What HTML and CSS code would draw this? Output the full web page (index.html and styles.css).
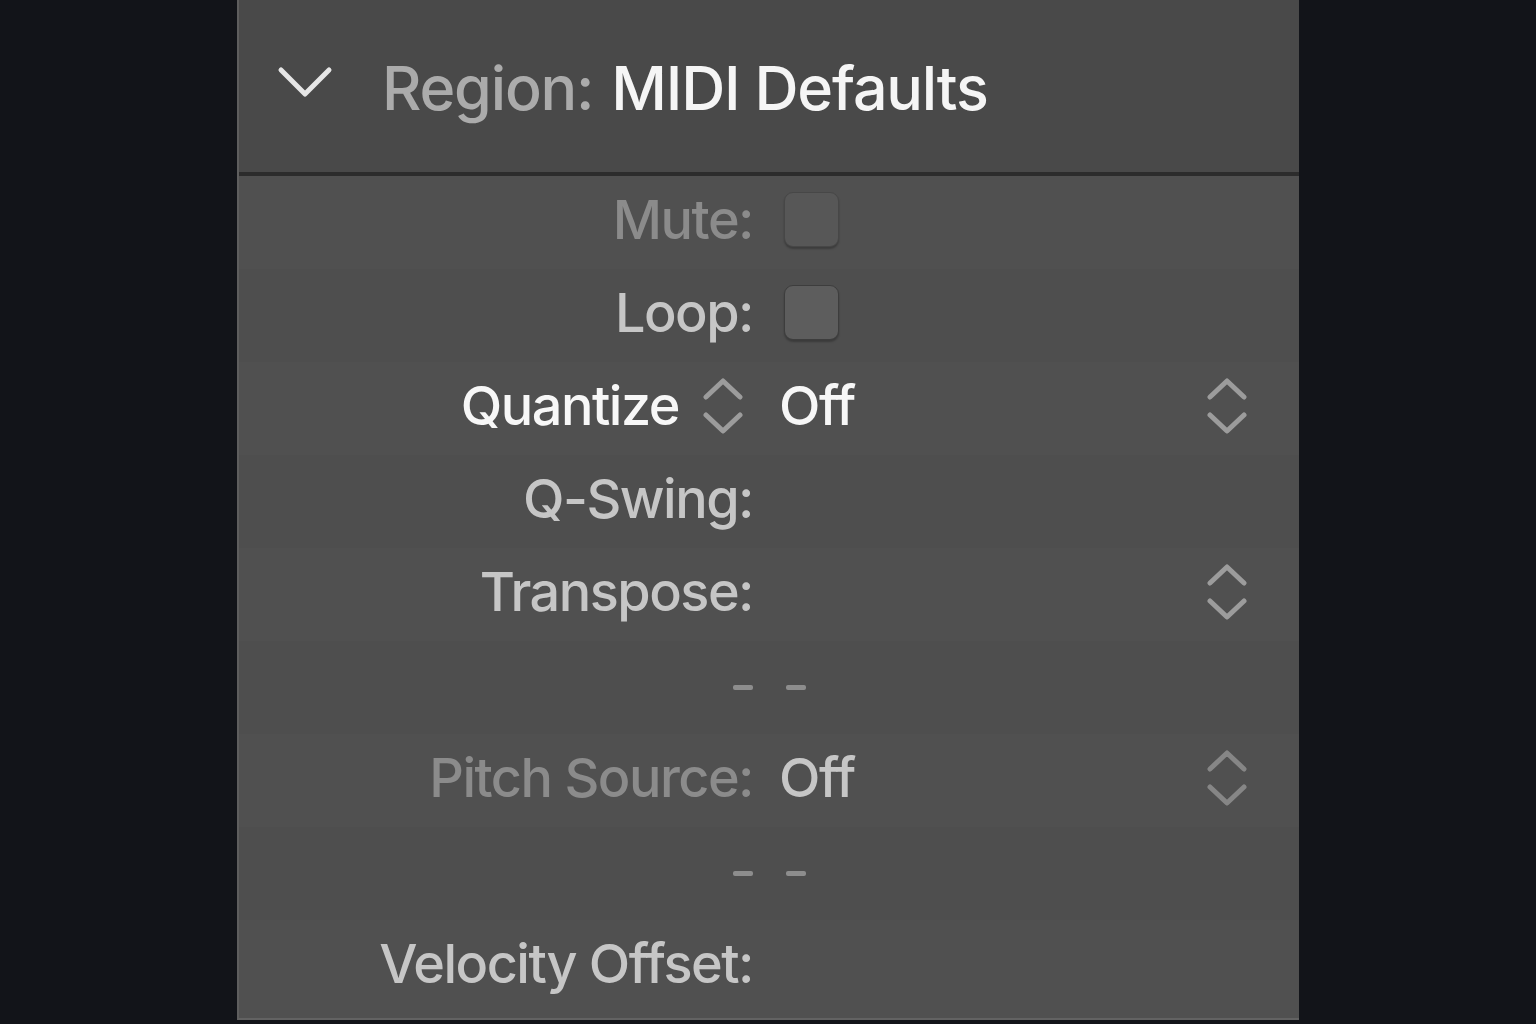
FILE: index.html
```html
<!DOCTYPE html>
<html lang="en">
<head>
    <meta charset="UTF-8">
    <meta name="viewport" content="width=device-width, initial-scale=1.0">
    <title>Region Inspector</title>
    <link rel="stylesheet" href="styles.css">
</head>
<body>
    <div id="inspector">
        <div id="header">
            <svg class="disclosure" width="56" height="32" viewBox="0 0 56 32">
                <path d="M4 4 L28 28 L52 4" fill="none" stroke="#e6e6e6" stroke-width="5" stroke-linecap="round" stroke-linejoin="round"/>
            </svg>
            <span class="title-key">Region:</span>
            <span class="title-value">MIDI Defaults</span>
        </div>

        <div class="row">
            <div class="label dim">Mute:</div>
            <div class="value"><div class="checkbox dim-box"></div></div>
        </div>

        <div class="row">
            <div class="label">Loop:</div>
            <div class="value"><div class="checkbox"></div></div>
        </div>

        <div class="row">
            <div class="label bright">
                Quantize
                <svg class="stepper small" width="40" height="56" viewBox="0 0 40 56">
                    <path d="M3 19 L20 3 L37 19 M3 37 L20 53 L37 37" fill="none" stroke-width="5" stroke-linecap="round" stroke-linejoin="round"/>
                </svg>
            </div>
            <div class="value">
                <span class="bright">Off</span>
                <svg class="stepper" width="40" height="56" viewBox="0 0 40 56">
                    <path d="M3 19 L20 3 L37 19 M3 37 L20 53 L37 37" fill="none" stroke-width="5" stroke-linecap="round" stroke-linejoin="round"/>
                </svg>
            </div>
        </div>

        <div class="row">
            <div class="label">Q-Swing:</div>
            <div class="value"></div>
        </div>

        <div class="row">
            <div class="label">Transpose:</div>
            <div class="value">
                <span></span>
                <svg class="stepper" width="40" height="56" viewBox="0 0 40 56">
                    <path d="M3 19 L20 3 L37 19 M3 37 L20 53 L37 37" fill="none" stroke-width="5" stroke-linecap="round" stroke-linejoin="round"/>
                </svg>
            </div>
        </div>

        <div class="row slider">
            <div class="label"><span class="dash"></span></div>
            <div class="value"><span class="dash"></span></div>
        </div>

        <div class="row">
            <div class="label dim">Pitch Source:</div>
            <div class="value">
                <span>Off</span>
                <svg class="stepper faded" width="40" height="56" viewBox="0 0 40 56">
                    <path d="M3 19 L20 3 L37 19 M3 37 L20 53 L37 37" fill="none" stroke-width="5" stroke-linecap="round" stroke-linejoin="round"/>
                </svg>
            </div>
        </div>

        <div class="row slider">
            <div class="label"><span class="dash"></span></div>
            <div class="value"><span class="dash"></span></div>
        </div>

        <div class="row">
            <div class="label">Velocity Offset:</div>
            <div class="value"></div>
        </div>
    </div>
</body>
</html>
```

FILE: styles.css
```css
body{
    margin: 0;
    background: #121419;
    height: 100vh;
    font-family: Inter, "Noto Sans", sans-serif;
    font-weight: 500;
}
#inspector{
    margin: 0 auto;
    width: 1062px;
    height: 1020px;
    display: flex;
    flex-direction: column;
    background: #505050;
    border-left: 2px solid #5e5e5e;
    border-bottom: 2px solid #626262;
    box-sizing: border-box;
    overflow: hidden;
}
#header{
    height: 176px;
    flex-shrink: 0;
    display: flex;
    align-items: center;
    padding-left: 38px;
    padding-top: 4px;
    box-sizing: border-box;
    background: #494949;
    border-bottom: 4px solid #2c2c2c;
    font-size: 61px;
    letter-spacing: -1.2px;
}
.disclosure{
    margin-right: 49px;
    margin-top: -12px;
}
.title-key{
    color: #ababab;
    margin-right: 18px;
}
.title-value{
    color: #f5f5f5;
}

.row{
    height: 93px;
    flex-shrink: 0;
    box-sizing: border-box;
    padding-bottom: 6px;
    display: grid;
    grid-template-columns: 514px 1fr;
    column-gap: 26px;
    align-items: center;
    font-size: 54px;
    letter-spacing: -1.5px;
    color: #c6c6c6;
}
.row.slider{
    padding-bottom: 0;
}
.row:nth-child(odd){
    background: #4e4e4e;
}
.label{
    display: flex;
    align-items: center;
    justify-content: flex-end;
}
.value{
    display: flex;
    align-items: center;
    justify-content: space-between;
    padding-right: 52px;
}
.dim{
    color: #8b8b8b;
}
.bright{
    color: #f7f7f7;
}

.checkbox{
    width: 55px;
    height: 55px;
    margin-left: 5px;
    box-sizing: border-box;
    border-radius: 9px;
    background: #5d5d5d;
    border: 1px solid #3d3d3d;
    box-shadow: 0 2px 2px rgba(0, 0, 0, 0.25);
}
.dim-box{
    background: #575757;
    border-color: #474747;
}

.stepper{
    stroke: #9c9c9c;
}
.stepper.small{
    margin-left: 24px;
    margin-right: 10px;
}
.stepper.faded{
    stroke: #868686;
}

.dash{
    display: block;
    width: 20px;
    height: 5px;
    border-radius: 2px;
    background: #8d8d8d;
}
.value .dash{
    margin-left: 7px;
}
```
